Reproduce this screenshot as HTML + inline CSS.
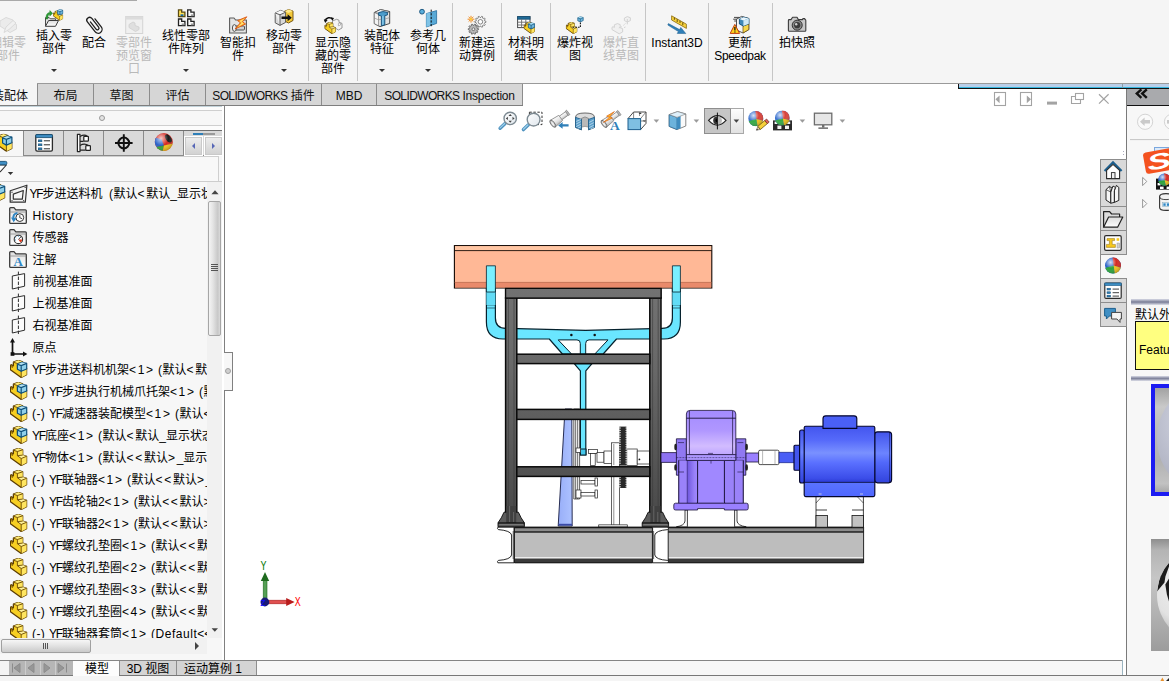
<!DOCTYPE html>
<html><head><meta charset="utf-8"><title>SOLIDWORKS</title>
<style>
html,body{margin:0;padding:0}
body{width:1169px;height:681px;overflow:hidden;position:relative;background:#fff;font-family:"Liberation Sans","Noto Sans CJK SC",sans-serif;font-size:12px;color:#000}
.abs{position:absolute}
svg{position:absolute;overflow:visible}
#tb{position:absolute;left:0;top:0;width:1169px;height:83px;background:#f5f5f5;border-bottom:1px solid #9a9a9a}
#tb .sep{position:absolute;top:3px;width:1px;height:78px;background:#c6c6c6}
.ti{position:absolute;top:0;width:0;height:83px}
.ti .t{position:absolute;left:-45px;width:90px;text-align:center;line-height:13px;font-size:12px;white-space:nowrap}
.ti.dis .t{color:#b9b9b9}
.ti .dd{position:absolute;left:-3px;top:69px;width:0;height:0;border-left:3px solid transparent;border-right:3px solid transparent;border-top:3px solid #333}
.ti svg{left:-10px;width:20px;height:20px}
.ti.lo svg{top:15px}.ti.hi svg{top:8px}
.ti.lo .t{top:37px}.ti.hi .t{top:30px}
#tabs{position:absolute;left:0;top:84px;height:22px;width:523px}
.tab{position:absolute;top:0;height:21px;border:1px solid #8c8c8c;border-top:none;border-bottom:none;background:#d6d6d6;line-height:25px;text-align:center;box-sizing:border-box;white-space:nowrap;color:#111;font-size:12px}
.tab i{font-style:normal}.sw{letter-spacing:-0.62px}.sw2{letter-spacing:-0.25px}
.tab.act{background:#f5f5f5;border:none;height:22px;top:-1px;line-height:27px}
#lp{position:absolute;left:0;top:106px;width:224px;height:554px;background:#f7f7f7;border-right:1px solid #808080}
.row{position:absolute;left:0;height:22px;line-height:22px;white-space:nowrap;font-size:12px}
.row span{position:absolute;top:1px}
.row i{font-style:normal}
.yf{letter-spacing:-1.2px}.lt{letter-spacing:1.7px}.pm{letter-spacing:0.4px}.hs{letter-spacing:0.55px}
</style></head><body>

<!-- TOOLBAR -->
<svg width="0" height="0" style="position:absolute">
<defs>
<linearGradient id="gFold" x1="0" y1="0" x2="0" y2="1"><stop offset="0" stop-color="#dcdcdc"/><stop offset="1" stop-color="#ffffff"/></linearGradient>
<linearGradient id="gTabBtn" x1="0" y1="0" x2="0" y2="1"><stop offset="0" stop-color="#fdfdfd"/><stop offset="1" stop-color="#dcdcdc"/></linearGradient>
<symbol id="pt" viewBox="0 0 18 18">
<path d="M0.4 5.3 L1.4 4.7 L3.4 5.8 L3.4 2.2 L8.3 0.3 L12.7 1.8 L12.7 7.1 L16.6 8.3 L16.6 14.7 L11.2 17.5 L0.4 9.7 Z" fill="#f7cf22" stroke="#5c3d02" stroke-width="1.25" stroke-linejoin="round"/>
<path d="M3.4 2.2 L8.3 0.3 L12.7 1.8 L7.4 3.5 Z" fill="#ffec7a"/>
<path d="M7.4 3.5 L12.7 1.8 L12.7 7.1 L7.4 7.7 Z" fill="#ffe560"/>
<path d="M7.4 7.7 L12.7 7.1 L16.6 8.3 L11.2 10.5 Z" fill="#fff29a"/>
<path d="M11.2 10.5 L16.6 8.3 L16.6 14.7 L11.2 17.5 Z" fill="#ffe560"/>
<path d="M3.4 2.2 L7.4 3.5 L7.4 7.7 L11.2 10.5 L16.6 8.3 M7.4 3.5 L12.7 1.8 M7.4 7.7 L12.7 7.1 M11.2 10.5 L11.2 17.5 M2.2 6.5 L3.4 5.8 M0.4 5.3 L2.2 6.5 L2.2 8" fill="none" stroke="#6b4a05" stroke-width="0.9" stroke-linejoin="round"/>
</symbol>
<symbol id="as" viewBox="0 0 18 18">
<use href="#pt" width="18" height="18"/>
<path d="M7.4 4.2 L11.9 2.3 L16.7 3.4 L16.7 9.0 L11.2 11.3 L7.4 9.2 Z" fill="#8fcfea" stroke="#0d4f7a" stroke-width="1.2" stroke-linejoin="round"/>
<path d="M7.4 4.2 L11.9 2.3 L16.7 3.4 L11.2 5.5 Z" fill="#b5e2f3"/>
<path d="M7.4 4.2 L11.2 5.5 L16.7 3.4 M11.2 5.5 L11.2 11.3" fill="none" stroke="#0d4f7a" stroke-width="1.2"/>
</symbol>
<symbol id="cube" viewBox="0 0 10 10">
<path d="M0.6 2.6 L5 0.6 L9.4 2.2 L9.4 7 L4.6 9.4 L0.6 7.4 Z" fill="#6fb6dc" stroke="#0d4f7a" stroke-width="1" stroke-linejoin="round"/>
<path d="M0.6 2.6 L5 0.6 L9.4 2.2 L4.6 4.2 Z" fill="#a9dcf1"/>
<path d="M0.6 2.6 L4.6 4.2 L9.4 2.2 M4.6 4.2 L4.6 9.4" fill="none" stroke="#0d4f7a" stroke-width="1"/>
</symbol>
<symbol id="fold" viewBox="0 0 18 17">
<path d="M0.7 15.4 L0.7 1.6 Q0.7 0.7 1.6 0.7 L5 0.7 L6.8 2.8 L16.4 2.8 Q17.3 2.8 17.3 3.7 L17.3 15.4 Q17.3 16.3 16.4 16.3 L1.6 16.3 Q0.7 16.3 0.7 15.4 Z" fill="url(#gFold)" stroke="#3a3a3a" stroke-width="1.3" stroke-linejoin="round"/>
<path d="M0.7 5 L17.3 5" stroke="#8a8a8a" stroke-width="0.8"/>
</symbol>
</defs></svg>
<div id="tb">
<div class="abs" style="left:0;top:0;width:137px;height:1px;background:#a9a9a9"></div>
<div class="sep" style="left:308px"></div>
<div class="sep" style="left:357px"></div>
<div class="sep" style="left:452px"></div>
<div class="sep" style="left:501px"></div>
<div class="sep" style="left:550px"></div>
<div class="sep" style="left:645px"></div>
<div class="sep" style="left:708px"></div>
<div class="sep" style="left:772px"></div>
<div class="ti lo dis" style="left:8px"><svg viewBox="0 0 20 20"><g opacity="0.55" fill="#e4e4e4" stroke="#c4c4c4" stroke-width="1" stroke-linejoin="round">
<path d="M2 6 L8 2.5 L15 5 L15 8 L18.5 9.5 L18.5 14 L12 17.5 L2 11 Z"/>
<path d="M6 17.5 L8 12 L15 5.5 L18 8 L11 14.5 Z" fill="#ededed"/></g></svg><div class="t">编辑零<br>部件</div></div>
<div class="ti hi" style="left:54px"><svg viewBox="0 0 20 20"><path d="M1.5 18.3 L1.5 9.6 L5.2 9.6 L6.2 10.8 L11.6 10.8 L11.6 12.6" fill="#e2e2e2" stroke="#4a4a4a" stroke-width="1"/>
<path d="M1.5 18.3 L4.6 12.5 L14.5 12.5 L11.5 18.3 Z" fill="url(#gFold)" stroke="#3c3c3c" stroke-width="1" stroke-linejoin="round"/>
<path d="M2 11 C1.8 6.5 3.5 4.6 5.8 4.4 L5.8 2.6 L8.6 5.3 L5.8 8 L5.8 6.3 C4.3 6.6 3.7 8 3.8 11 Z" fill="#2c9c35" stroke="#1d7a26" stroke-width="0.5"/>
<use href="#pt" x="9" y="2.2" width="10.5" height="10.5"/>
<use href="#cube" x="13" y="1" width="6.4" height="6.4"/></svg><div class="t">插入零<br>部件</div><div class="dd"></div></div>
<div class="ti lo" style="left:94px"><svg viewBox="0 0 20 20"><g transform="translate(10 9) rotate(52) scale(0.86)" fill="none" stroke="#1e1e1e" stroke-width="1.5" stroke-linecap="round">
<path d="M-5.5 1 L5.2 1 A1.9 1.9 0 0 0 5.2 -2.8 L-7.6 -2.8 A3.3 3.3 0 0 0 -7.6 3.8 L6.8 3.8 A4.6 4.6 0 0 0 6.8 -5.4 L-5 -5.4" transform="translate(1 0.8)"/></g></svg><div class="t">配合</div></div>
<div class="ti lo dis" style="left:134px"><svg viewBox="0 0 20 20"><g opacity="0.8"><rect x="1.7" y="1.5" width="17" height="17" fill="#efefef" stroke="#cdcdcd" stroke-width="1"/>
<rect x="1.7" y="1.5" width="17" height="3" fill="#d6d6d6"/>
<path d="M5 9.5 L9 7 L11 8 L11 10.5 L15 12 L15 14.5 L11.5 16.5 L5 12.5 Z" fill="#dadada" stroke="#c6c6c6" stroke-width="0.8"/></g></svg><div class="t">零部件<br>预览窗<br>口</div></div>
<div class="ti hi" style="left:186px"><svg viewBox="0 0 20 20"><path d="M2.5 1.9 h3.2 v2.3 h3.2 v4.4 h-6.4 Z" fill="#ffe25a" stroke="#5a4a10" stroke-width="1.3" stroke-linejoin="miter"/><rect x="4.5" y="6.3" width="3" height="1.8" fill="#1c6aa8"/><path d="M11.7 1.9 h3.2 v2.3 h3.2 v4.4 h-6.4 Z" fill="#fafafa" stroke="#222" stroke-width="1.3" stroke-linejoin="miter"/><rect x="14.9" y="6.4" width="2.8" height="1.8" fill="#9a9a9a"/><path d="M2.5 11.0 h3.2 v2.3 h3.2 v4.4 h-6.4 Z" fill="#fafafa" stroke="#222" stroke-width="1.3" stroke-linejoin="miter"/><rect x="5.7" y="15.5" width="2.8" height="1.8" fill="#9a9a9a"/><path d="M11.7 11.0 h3.2 v2.3 h3.2 v4.4 h-6.4 Z" fill="#fafafa" stroke="#222" stroke-width="1.3" stroke-linejoin="miter"/><rect x="14.9" y="15.5" width="2.8" height="1.8" fill="#9a9a9a"/></svg><div class="t">线性零部<br>件阵列</div><div class="dd"></div></div>
<div class="ti lo" style="left:238px"><svg viewBox="0 0 20 20"><path d="M1.6 18 L1.6 3 L6 3 L7.6 5 L18.4 5 L18.4 18 Z" fill="#e4e4e4" stroke="#5a5a5a" stroke-width="1.1" stroke-linejoin="round"/>
<rect x="5.5" y="11" width="11" height="4" rx="1" fill="#d0d0d0" stroke="#444" stroke-width="0.9"/>
<ellipse cx="6.4" cy="13" rx="2" ry="3.4" fill="#efefef" stroke="#444" stroke-width="0.9"/>
<path d="M18.8 1.8 L9.6 5.6 L12.4 7.8 L7 14 L17.6 9 L14.6 6.8 Z" fill="#ffb428" stroke="#d8541a" stroke-width="0.9" stroke-linejoin="round"/><path d="M17 3.4 L11.6 6 L13.8 7.8 L10 12 L15.6 8.6 L13.4 6.6 Z" fill="#ffe27a"/></svg><div class="t">智能扣<br>件</div></div>
<div class="ti hi" style="left:284px"><svg viewBox="0 0 20 20"><path d="M10.5 3.2 L14.6 1.6 L19 3 L19 12.5 L14.5 15 L10.5 13 Z" fill="#f2c83a" stroke="#6b4a05" stroke-width="0.9" stroke-linejoin="round"/>
<path d="M10.5 3.2 L14.6 1.6 L19 3 L14.5 5 Z" fill="#ffe98a"/>
<path d="M1.2 5 L6.5 2.4 L11.6 4.2 L11.6 14.4 L6 17.4 L1.2 14.8 Z" fill="#d9d9d9" stroke="#4e4e4e" stroke-width="0.9" stroke-linejoin="round"/>
<path d="M1.2 5 L6.5 2.4 L11.6 4.2 L6 6.8 Z" fill="#f7f7f7"/>
<path d="M1.2 5 L6 6.8 L6 17.4 Z" fill="#efefef"/>
<path d="M1.2 5 L6 6.8 L11.6 4.2 M6 6.8 L6 17.4" fill="none" stroke="#4e4e4e" stroke-width="0.9"/>
<path d="M7.5 8.6 L13.6 8.6 L13.6 6.2 L17.8 9.7 L13.6 13.2 L13.6 10.9 L7.5 10.9 Z" fill="#111"/></svg><div class="t">移动零<br>部件</div><div class="dd"></div></div>
<div class="ti lo" style="left:333px"><svg viewBox="0 0 20 20"><path d="M9.5 6 L13.5 4.3 L16 5.2 L16 7.4 L19 8.4 L19 13 L15.5 15 L9.5 11.5 Z" fill="#f4f4f4" stroke="#8d8d8d" stroke-width="0.9" stroke-linejoin="round"/>
<path d="M15.4 8.4 L17.6 7.8 L17.6 10 L15.4 10.8 Z" fill="#fff" stroke="#9a9a9a" stroke-width="0.7"/>
<use href="#pt" x="1.4" y="7" width="12" height="12"/>
<path d="M2 6.2 C3 2.4 7.6 1.6 9.6 4.4" fill="none" stroke="#111" stroke-width="1.5"/>
<path d="M0.8 4.2 L4.6 5 L2.2 8 Z" fill="#111"/><path d="M8 2.2 L11 3 L9.4 6 Z" fill="#111"/></svg><div class="t">显示隐<br>藏的零<br>部件</div></div>
<div class="ti hi" style="left:382px"><svg viewBox="0 0 20 20"><path d="M2.3 4.5 L8.5 1.6 L17.7 3.6 L17.7 15.5 L8 18.6 L2.3 15.6 Z" fill="#e2e2e2" stroke="#4b4b4b" stroke-width="1" stroke-linejoin="round"/>
<path d="M2.3 4.5 L8.5 1.6 L17.7 3.6 L11 6 Z" fill="#fafafa" stroke="#4b4b4b" stroke-width="0.7"/>
<path d="M2.3 4.5 L6.5 6.4 L6.5 17.8 L2.3 15.6 Z" fill="#f3f3f3" stroke="#6b6b6b" stroke-width="0.6"/>
<path d="M6.6 4.6 Q11 2.6 15.4 4.4 L15.4 7 L12.8 7.6 L12.8 16.8 L9.4 17.8 L9.4 8 L6.6 7.2 Z" fill="#4c9ccb" stroke="#134e78" stroke-width="0.9" stroke-linejoin="round"/>
<path d="M10.2 8 L11.6 7.8 L11.6 16.6 L10.2 17 Z" fill="#8ccbea"/>
<path d="M2.3 10 L6.5 11.8 M6.5 11.8 L9.4 11.2 M12.8 11 L17.7 9.6" stroke="#8a8a8a" stroke-width="0.6" fill="none"/></svg><div class="t">装配体<br>特征</div><div class="dd"></div></div>
<div class="ti hi" style="left:428px"><svg viewBox="0 0 20 20"><circle cx="4" cy="3.7" r="2.4" fill="#5aaedb" stroke="#134e78" stroke-width="0.9"/>
<path d="M8.4 5.6 L18.6 2.6 L18.6 15.4 L8.4 19 Z" fill="#58a9d6" stroke="#2a6f9e" stroke-width="0.8" stroke-linejoin="round"/>
<path d="M8.4 5.6 L12 4.6 L12 17.6 L8.4 19 Z" fill="#7fc3e6"/>
<path d="M13.2 1.6 L13.2 19.4" stroke="#111" stroke-width="1" stroke-dasharray="2.2 1.4"/></svg><div class="t">参考几<br>何体</div><div class="dd"></div></div>
<div class="ti lo" style="left:477px"><svg viewBox="0 0 20 20"><path d="M18.98 6.30 L18.98 7.30 L17.59 7.76 L17.35 8.49 L18.21 9.67 L17.62 10.49 L16.23 10.04 L15.60 10.49 L15.60 11.95 L14.64 12.26 L13.79 11.08 L13.01 11.08 L12.16 12.26 L11.20 11.95 L11.20 10.49 L10.57 10.04 L9.18 10.49 L8.59 9.67 L9.45 8.49 L9.21 7.76 L7.82 7.30 L7.82 6.30 L9.21 5.84 L9.45 5.11 L8.59 3.93 L9.18 3.11 L10.57 3.56 L11.20 3.11 L11.20 1.65 L12.16 1.34 L13.01 2.52 L13.79 2.52 L14.64 1.34 L15.60 1.65 L15.60 3.11 L16.23 3.56 L17.62 3.11 L18.21 3.93 L17.35 5.11 L17.59 5.84Z" fill="#f6f6f6" stroke="#6a6a6a" stroke-width="0.8" stroke-linejoin="round"/><circle cx="13.4" cy="6.8" r="2.3" fill="#fdfdfd" stroke="#6a6a6a" stroke-width="0.8"/><path d="M11.58 13.73 L11.58 14.67 L10.20 15.07 L9.99 15.73 L10.86 16.87 L10.32 17.62 L8.97 17.14 L8.40 17.55 L8.44 18.98 L7.56 19.27 L6.75 18.08 L6.05 18.08 L5.24 19.27 L4.36 18.98 L4.40 17.55 L3.83 17.14 L2.48 17.62 L1.94 16.87 L2.81 15.73 L2.60 15.07 L1.22 14.67 L1.22 13.73 L2.60 13.33 L2.81 12.67 L1.94 11.53 L2.48 10.78 L3.83 11.26 L4.40 10.85 L4.36 9.42 L5.24 9.13 L6.05 10.32 L6.75 10.32 L7.56 9.13 L8.44 9.42 L8.40 10.85 L8.97 11.26 L10.32 10.78 L10.86 11.53 L9.99 12.67 L10.20 13.33Z" fill="#b9b9b9" stroke="#5a5a5a" stroke-width="0.8" stroke-linejoin="round"/><circle cx="6.4" cy="14.2" r="1.4" fill="#f0f0f0" stroke="#5a5a5a" stroke-width="0.8"/><g stroke="#f08a1c" stroke-width="1" stroke-linecap="round"><path d="M4 1.2 L4 7.2 M1 4.2 L7 4.2 M1.9 2.1 L6.1 6.3 M6.1 2.1 L1.9 6.3"/></g><circle cx="4" cy="4.2" r="1.1" fill="#ffd23a"/></svg><div class="t">新建运<br>动算例</div></div>
<div class="ti lo" style="left:526px"><svg viewBox="0 0 20 20"><rect x="1.6" y="1.6" width="12.4" height="11" fill="#fff" stroke="#4a4a4a" stroke-width="1"/>
<rect x="1.6" y="1.6" width="12.4" height="2.6" fill="#1f6a96" stroke="#174f74" stroke-width="0.8"/>
<path d="M1.6 7.2 H14 M1.6 10 H14 M5.6 4.2 V12.6 M9.8 4.2 V12.6" stroke="#6a6a6a" stroke-width="0.9"/>
<use href="#pt" x="7.6" y="7" width="11.8" height="11.8"/>
<use href="#cube" x="11.6" y="7.2" width="7.6" height="7.2"/></svg><div class="t">材料明<br>细表</div></div>
<div class="ti lo" style="left:575px"><svg viewBox="0 0 20 20"><use href="#pt" x="0.8" y="7" width="12" height="12"/>
<path d="M7.6 12.2 H15.4 V6.5" fill="none" stroke="#111" stroke-width="1.1" stroke-dasharray="1.6 1.1"/>
<use href="#cube" x="11.8" y="1.2" width="7.4" height="6.2"/></svg><div class="t">爆炸视<br>图</div></div>
<div class="ti lo dis" style="left:621px"><svg viewBox="0 0 20 20"><g opacity="0.9" fill="#f0f0f0" stroke="#cccccc" stroke-width="0.9" stroke-linejoin="round">
<path d="M1 12.3 L2 11.7 L3.4 12.4 L3.4 9.8 L6.4 8.6 L9.2 9.6 L9.2 12.8 L11.6 13.6 L11.6 17 L8.2 18.8 L1 14.6 Z"/>
<path d="M7.8 13 L11 11.6 M12.4 10.4 L14.8 8.2 M13 12.6 L15 11.8" fill="none" stroke-dasharray="1.6 1"/>
<path d="M13.4 3 L16.4 1.6 L19.4 2.8 L19.4 5.6 L16.2 7 L13.4 5.6 Z"/><path d="M16.3 4 L16.3 9.4" fill="none"/></g></svg><div class="t">爆炸直<br>线草图</div></div>
<div class="ti lo" style="left:677px"><svg viewBox="0 0 20 20"><path d="M4.6 0.8 L19.4 9.2 L19.4 13.4 L4.6 5 Z" fill="#f6d13a" stroke="#8a6a10" stroke-width="0.8" stroke-linejoin="round"/>
<path d="M7.4 2.6 v2.2 M10.2 4.2 v2.8 M13 5.8 v2.2 M15.8 7.4 v2.8" stroke="#5a4508" stroke-width="0.9"/>
<path d="M1.4 8.6 L12.6 14.6 L13.8 12.4 L18.8 18.6 L10.2 18.4 L11.4 16.6 L0.8 10 Z" fill="#2f7fb8" stroke="#1c5d8d" stroke-width="0.5" stroke-linejoin="round"/></svg><div class="t">Instant3D</div></div>
<div class="ti lo" style="left:740px"><svg viewBox="0 0 20 20"><path d="M4 2.4 H9.6 M3.2 4.2 H8 M4.2 6 H7" stroke="#333" stroke-width="0.9"/>
<path d="M6.5 4.2 L11.6 1.4 L18.8 3.4 L18.8 14.6 L13 18 L6.5 15 Z" fill="#f6f6f6" stroke="#3f3f3f" stroke-width="0.9" stroke-linejoin="round"/>
<path d="M13 11 L18.8 8.8 L18.8 14.6 L13 18 Z" fill="#f6d64a" stroke="#6b4a05" stroke-width="0.7"/>
<path d="M9.4 4 L13.6 2.2 L18.8 3.6 L18.8 8.8 L13.4 11 L9.4 9 Z" fill="#3f88b6" stroke="#0d4f7a" stroke-width="0.9" stroke-linejoin="round"/>
<path d="M9.4 4 L13.6 2.2 L18.8 3.6 L13.4 5.6 Z" fill="#eaf6fc"/>
<path d="M13.4 5.6 L18.8 3.6 L18.8 8.8 L13.4 11 Z" fill="#cfe9f6"/>
<path d="M4.8 9.4 L9.6 18.4 L0.2 18.4 Z" fill="#ffd21e" stroke="#c03a10" stroke-width="1" stroke-linejoin="round"/>
<path d="M4.9 12 V15.4 M4.9 16.4 V17.4" stroke="#111" stroke-width="1.3"/></svg><div class="t">更新<br><span style="letter-spacing:-0.3px">Speedpak</span></div></div>
<div class="ti lo" style="left:797px"><svg viewBox="0 0 20 20"><path d="M1.4 15.4 V5.4 Q1.4 4.6 2.2 4.6 H4 L5.6 2.2 H10 L11.4 4.6 H15.4 L16 3.6 H17.6 L18.2 4.6 Q18.8 4.8 18.8 5.6 V15.4 Q18.8 16.2 18 16.2 H2.2 Q1.4 16.2 1.4 15.4 Z" fill="#c8c8c8" stroke="#3c3c3c" stroke-width="1.1" stroke-linejoin="round"/>
<circle cx="10.2" cy="10.2" r="5" fill="#8a8a8a" stroke="#333" stroke-width="1"/>
<circle cx="10.2" cy="10.2" r="3.1" fill="#3a3a3a"/><circle cx="9.2" cy="9.2" r="1.2" fill="#cfcfcf"/></svg><div class="t">拍快照</div></div>
</div>

<!-- TABS -->
<div id="tabs">
<div class="tab act" style="left:-21px;width:58px;text-align:right;padding-right:9px">装配体</div>
<div class="tab" style="left:37px;width:57px">布局</div>
<div class="tab" style="left:93px;width:57px">草图</div>
<div class="tab" style="left:149px;width:57px">评估</div>
<div class="tab" style="left:205px;width:117px"><i class="sw">SOLIDWORKS</i> 插件</div>
<div class="tab" style="left:321px;width:56px">MBD</div>
<div class="tab" style="left:376px;width:147px"><i class="sw">SOLIDWORKS</i><i class="sw2"> Inspection</i></div>
<div class="abs" style="left:0;top:21px;width:523px;height:1px;background:#7e7e7e"></div>
</div>

<!-- LEFT -->
<div id="lp">
<div class="abs" style="left:0;top:0;width:222px;height:1px;background:#c3d3da"></div>
<div class="abs" style="left:0;top:1px;width:222px;height:3px;background:#fcfcfc"></div>
<div class="abs" style="left:0;top:4px;width:222px;height:1px;background:#cfcfcf"></div>
<div class="abs" style="left:0;top:19px;width:222px;height:1px;background:#cfcfcf"></div>
<div class="abs" style="left:0;top:20px;width:222px;height:4px;background:#fcfcfc"></div>
<div class="abs" style="left:98.5px;top:9px;width:6px;height:6px;border:1px solid #9a9a9a;border-radius:50%;background:#e4e4e4;box-sizing:border-box"></div>
<div class="abs" style="left:0;top:24px;width:222px;height:26px;background:#d9d9d9;border-top:1px solid #707070;border-bottom:1px solid #8a8a8a;box-sizing:border-box"></div>
<div class="abs" style="left:0;top:25px;width:23px;height:25px;background:#f7f7f7"></div>
<div class="abs" style="left:23px;top:25px;width:1px;height:24px;background:#8a8a8a"></div>
<div class="abs" style="left:63px;top:25px;width:1px;height:24px;background:#8a8a8a"></div>
<div class="abs" style="left:103px;top:25px;width:1px;height:24px;background:#8a8a8a"></div>
<div class="abs" style="left:143px;top:25px;width:1px;height:24px;background:#8a8a8a"></div>
<div class="abs" style="left:183px;top:25px;width:1px;height:24px;background:#8a8a8a"></div>
<div class="abs" style="left:193px;top:27px;width:20px;height:2px;background:#2f7fb8"></div><div class="abs" style="left:203px;top:27px;width:12px;height:2px;background:#9a9a9a"></div>
<div class="abs" style="left:184px;top:30px;width:19px;height:20px;background:#fff"></div>
<div class="abs" style="left:185px;top:31px;width:17px;height:18px;background:linear-gradient(#ececec,#d2d2d2);border:1px solid #c9c9c9;box-sizing:border-box"></div>
<div class="abs" style="left:192px;top:37px;width:0;height:0;border-top:3px solid transparent;border-bottom:3px solid transparent;border-right:3.5px solid #5767b6"></div>
<div class="abs" style="left:204px;top:30px;width:18px;height:20px;background:#fff"></div>
<div class="abs" style="left:205px;top:31px;width:17px;height:18px;background:linear-gradient(#ececec,#d2d2d2);border:1px solid #c9c9c9;box-sizing:border-box"></div>
<div class="abs" style="left:212px;top:37px;width:0;height:0;border-top:3px solid transparent;border-bottom:3px solid transparent;border-left:3.5px solid #5767b6"></div>
<svg style="left:0;top:24px" width="184" height="26" viewBox="0 130 184 26">
<use href="#as" x="-4.8" y="133.8" width="18" height="18"/>
<rect x="35.8" y="134.6" width="16.6" height="16.6" rx="1.4" fill="#fff" stroke="#2b2b2b" stroke-width="1.3"/><rect x="35.8" y="134.6" width="16.6" height="3" rx="1" fill="#3f8fc4" stroke="#174f74" stroke-width="0.9"/>
<rect x="38.3" y="139.9" width="3.6" height="1.8" fill="#2f7fb8" stroke="#174f74" stroke-width="0.6"/><path d="M43.8 140.8 H50" stroke="#2b2b2b" stroke-width="1"/>
<rect x="38.3" y="143.9" width="3.6" height="1.8" fill="#2f7fb8" stroke="#174f74" stroke-width="0.6"/><path d="M43.8 144.8 H50" stroke="#2b2b2b" stroke-width="1"/>
<rect x="38.3" y="147.9" width="3.6" height="1.8" fill="#2f7fb8" stroke="#174f74" stroke-width="0.6"/><path d="M43.8 148.8 H50" stroke="#2b2b2b" stroke-width="1"/>
<g fill="#fff" stroke="#222" stroke-width="1.2" stroke-linejoin="round"><rect x="77.4" y="134.4" width="2.6" height="17.2"/><path d="M80 136.4 Q84.6 133.8 87.4 136.4 M80 141.4 H83.6 M80 145.4 Q84.6 142.8 88.6 145.6 M80 150.2 H85.6" fill="none"/><rect x="83.8" y="136.4" width="4.6" height="4.8" rx="0.6"/><rect x="85.8" y="145.6" width="4.6" height="4.8" rx="0.6"/></g>
<circle cx="123.8" cy="143" r="5.4" fill="none" stroke="#111" stroke-width="2"/><path d="M123.8 134.2 V151.8 M115 143 H132.6" stroke="#111" stroke-width="1.9"/>
<defs><clipPath id="cb"><circle cx="163.8" cy="142" r="9"/></clipPath><radialGradient id="gball" cx="0.35" cy="0.3" r="0.8"><stop offset="0" stop-color="#fff" stop-opacity="0.75"/><stop offset="0.5" stop-color="#fff" stop-opacity="0"/><stop offset="1" stop-color="#000" stop-opacity="0.35"/></radialGradient></defs>
<g clip-path="url(#cb)"><rect x="154" y="132" width="20" height="22" fill="#d42a22"/><path d="M154 137 L161.6 139.4 L164 145.6 L154 147.4 Z" fill="#2b62c8"/><path d="M154 147.4 L164 145.6 L162 154 H154 Z" fill="#2aa33a"/><path d="M164 145.6 L174 143.4 V154 H162 Z" fill="#f0c21a"/><ellipse cx="168.4" cy="138.4" rx="2.6" ry="4.6" transform="rotate(-35 168.4 138.4)" fill="#1a1a1a"/><circle cx="163.8" cy="142" r="9" fill="url(#gball)"/></g>
</svg>
<div class="abs" style="left:-1px;top:50px;width:220px;height:26px;border:1px solid #cfcfcf;background:#f8f8f8;box-sizing:border-box"></div>
<svg style="left:0;top:54px" width="16" height="20" viewBox="0 160 16 20"><path d="M-6 165 H6.4 L0.4 171.6 H-6 Z" fill="#fff" stroke="#333" stroke-width="1.1" stroke-linejoin="round"/><rect x="-6" y="161.4" width="12.8" height="3.4" rx="1.2" fill="#3f8fc4" stroke="#174f74" stroke-width="0.9"/><path d="M7.8 171.9 h5.4 l-2.7 3 Z" fill="#333"/></svg>
<div class="abs" style="left:0;top:75px;width:222px;height:1px;background:#cdcdcd"></div>
<div id="tree" class="abs" style="left:0;top:76px;width:207px;height:456px;overflow:hidden;background:#f7f7f7">
<div class="row" style="top:0px"><svg style="left:-12px;top:1px" width="18" height="18"><use href="#as" width="18" height="18"/></svg><svg style="left:9px;top:2px" width="20" height="20" viewBox="9 184 20 20"><path d="M10.2 190.8 L26.9 185.2 L25.3 202.2 L10.2 202.2 Z" fill="#f4f4f4" stroke="#333" stroke-width="1.2" stroke-linejoin="round"/><path d="M13.3 194.1 L23.3 190.5 L22.3 199.1 L13.3 199.1 Z" fill="#f7f7f7" stroke="#333" stroke-width="1.2" stroke-linejoin="round"/><g fill="#444"><circle cx="12" cy="192.2" r="0.7"/><circle cx="25.2" cy="187.4" r="0.7"/><circle cx="12" cy="200.6" r="0.7"/><circle cx="23.6" cy="200.6" r="0.7"/></g></svg><span style="left:29.5px"><i class="yf">YF</i>步进送料机&nbsp; <i class="pm">(</i>默认<i class="lt">&lt;</i>默认_显示状态</span></div>
<div class="row" style="top:22px"><svg style="left:9px;top:3px" width="18" height="17"><use href="#fold" width="18" height="17"/><circle cx="10.8" cy="10.6" r="3.9" fill="#fff" stroke="#333" stroke-width="1"/><path d="M10.8 8.2 V10.8 L13 11.6" fill="none" stroke="#333" stroke-width="0.9"/><path d="M8.4 6 Q3.4 7 4.6 12" fill="none" stroke="#2f86c4" stroke-width="2"/><path d="M2 10.6 L7.6 11.2 L4.6 15.2 Z" fill="#2f86c4"/></svg><span style="left:32.5px"><i class="hs">History</i></span></div>
<div class="row" style="top:44px"><svg style="left:9px;top:3px" width="18" height="17"><use href="#fold" width="18" height="17"/><circle cx="9.4" cy="10.4" r="4.2" fill="#fff" stroke="#333" stroke-width="1.1"/><path d="M9.4 10.4 L12 7.8" stroke="#333" stroke-width="1"/><path d="M9.4 10.4 L13.2 10.4 A3.8 3.8 0 0 1 11.4 13.6 Z" fill="#e03a1e"/><path d="M6.4 8.2 l0.8 0.6 M6 11 h1 M9.4 6.8 v1" stroke="#2f86c4" stroke-width="0.9"/></svg><span style="left:32.5px">传感器</span></div>
<div class="row" style="top:66px"><svg style="left:9px;top:3px" width="18" height="17"><use href="#fold" width="18" height="17"/><text x="9.2" y="14.8" text-anchor="middle" font-family="Liberation Serif,serif" font-weight="bold" font-size="13" fill="#2f86c4">A</text></svg><span style="left:32.5px">注解</span></div>
<div class="row" style="top:88px"><svg style="left:11px;top:1px" width="16" height="20" viewBox="11 0 16 20"><path d="M12.3 5 L24.6 2.6 L24.6 15.2 L12.3 18 Z" fill="#fbfbfb" stroke="#2e2e2e" stroke-width="1" stroke-linejoin="round"/><path d="M18.4 0.6 V19.6" stroke="#2e2e2e" stroke-width="1" stroke-dasharray="3.4 1.6"/></svg><span style="left:32.5px">前视基准面</span></div>
<div class="row" style="top:110px"><svg style="left:11px;top:1px" width="16" height="20" viewBox="11 0 16 20"><path d="M12.3 5 L24.6 2.6 L24.6 15.2 L12.3 18 Z" fill="#fbfbfb" stroke="#2e2e2e" stroke-width="1" stroke-linejoin="round"/><path d="M18.4 0.6 V19.6" stroke="#2e2e2e" stroke-width="1" stroke-dasharray="3.4 1.6"/></svg><span style="left:32.5px">上视基准面</span></div>
<div class="row" style="top:132px"><svg style="left:11px;top:1px" width="16" height="20" viewBox="11 0 16 20"><path d="M12.3 5 L24.6 2.6 L24.6 15.2 L12.3 18 Z" fill="#fbfbfb" stroke="#2e2e2e" stroke-width="1" stroke-linejoin="round"/><path d="M18.4 0.6 V19.6" stroke="#2e2e2e" stroke-width="1" stroke-dasharray="3.4 1.6"/></svg><span style="left:32.5px">右视基准面</span></div>
<div class="row" style="top:154px"><svg style="left:9px;top:1px" width="20" height="20" viewBox="9 0 20 20"><path d="M12.5 4 V17 H24" fill="none" stroke="#111" stroke-width="1.7"/><path d="M12.5 1 L15 5.4 H10 Z M27.4 17 L23 14.4 V19.6 Z" fill="#111"/><rect x="10.6" y="15.2" width="3.8" height="3.6" fill="#111"/></svg><span style="left:32.5px">原点</span></div>
<div class="row" style="top:176px"><svg style="left:10px;top:2px" width="18" height="18"><use href="#as" width="18" height="18"/></svg><span style="left:32.0px"><i class="yf">YF</i>步进送料机机架<i class="lt">&lt;1&gt;</i> <i class="pm">(</i>默认<i class="lt">&lt;</i>默认_显示状态-1&gt;)</span></div>
<div class="row" style="top:198px"><svg style="left:10px;top:2px" width="18" height="18"><use href="#as" width="18" height="18"/></svg><span style="left:32.0px"><i class="pm">(-) </i><i class="yf">YF</i>步进执行机械爪托架<i class="lt">&lt;1&gt;</i> <i class="pm">(</i>默认<i class="lt">&lt;</i>默认_显示状态-1&gt;)</span></div>
<div class="row" style="top:220px"><svg style="left:10px;top:2px" width="18" height="18"><use href="#as" width="18" height="18"/></svg><span style="left:32.0px"><i class="pm">(-) </i><i class="yf">YF</i>减速器装配模型<i class="lt">&lt;1&gt;</i> <i class="pm">(</i>默认<i class="lt">&lt;</i>默认_显示状态-1&gt;)</span></div>
<div class="row" style="top:242px"><svg style="left:10px;top:2px" width="18" height="18"><use href="#as" width="18" height="18"/></svg><span style="left:32.0px"><i class="yf">YF</i>底座<i class="lt">&lt;1&gt;</i> <i class="pm">(</i>默认<i class="lt">&lt;</i>默认_显示状态-1&gt;)</span></div>
<div class="row" style="top:264px"><svg style="left:10px;top:2px" width="18" height="18"><use href="#pt" width="18" height="18"/></svg><span style="left:32.0px"><i class="yf">YF</i>物体<i class="lt">&lt;1&gt;</i> <i class="pm">(</i>默认<i class="lt">&lt;&lt;</i>默认<i class="lt">&gt;</i>_显示状态 1&gt;)</span></div>
<div class="row" style="top:286px"><svg style="left:10px;top:2px" width="18" height="18"><use href="#pt" width="18" height="18"/></svg><span style="left:32.0px"><i class="pm">(-) </i><i class="yf">YF</i>联轴器<i class="lt">&lt;1&gt;</i> <i class="pm">(</i>默认<i class="lt">&lt;&lt;</i>默认<i class="lt">&gt;</i>_显示状态 1&gt;)</span></div>
<div class="row" style="top:308px"><svg style="left:10px;top:2px" width="18" height="18"><use href="#pt" width="18" height="18"/></svg><span style="left:32.0px"><i class="pm">(-) </i><i class="yf">YF</i>齿轮轴2<i class="lt">&lt;1&gt;</i> <i class="pm">(</i>默认<i class="lt">&lt;&lt;</i>默认<i class="lt">&gt;</i>_显示状态 1&gt;)</span></div>
<div class="row" style="top:330px"><svg style="left:10px;top:2px" width="18" height="18"><use href="#pt" width="18" height="18"/></svg><span style="left:32.0px"><i class="pm">(-) </i><i class="yf">YF</i>联轴器2<i class="lt">&lt;1&gt;</i> <i class="pm">(</i>默认<i class="lt">&lt;&lt;</i>默认<i class="lt">&gt;</i>_显示状态 1&gt;)</span></div>
<div class="row" style="top:352px"><svg style="left:10px;top:2px" width="18" height="18"><use href="#pt" width="18" height="18"/></svg><span style="left:32.0px"><i class="pm">(-) </i><i class="yf">YF</i>螺纹孔垫圈<i class="lt">&lt;1&gt;</i> <i class="pm">(</i>默认<i class="lt">&lt;&lt;</i>默认<i class="lt">&gt;</i>_显示状态 1&gt;)</span></div>
<div class="row" style="top:374px"><svg style="left:10px;top:2px" width="18" height="18"><use href="#pt" width="18" height="18"/></svg><span style="left:32.0px"><i class="pm">(-) </i><i class="yf">YF</i>螺纹孔垫圈<i class="lt">&lt;2&gt;</i> <i class="pm">(</i>默认<i class="lt">&lt;&lt;</i>默认<i class="lt">&gt;</i>_显示状态 1&gt;)</span></div>
<div class="row" style="top:396px"><svg style="left:10px;top:2px" width="18" height="18"><use href="#pt" width="18" height="18"/></svg><span style="left:32.0px"><i class="pm">(-) </i><i class="yf">YF</i>螺纹孔垫圈<i class="lt">&lt;3&gt;</i> <i class="pm">(</i>默认<i class="lt">&lt;&lt;</i>默认<i class="lt">&gt;</i>_显示状态 1&gt;)</span></div>
<div class="row" style="top:418px"><svg style="left:10px;top:2px" width="18" height="18"><use href="#pt" width="18" height="18"/></svg><span style="left:32.0px"><i class="pm">(-) </i><i class="yf">YF</i>螺纹孔垫圈<i class="lt">&lt;4&gt;</i> <i class="pm">(</i>默认<i class="lt">&lt;&lt;</i>默认<i class="lt">&gt;</i>_显示状态 1&gt;)</span></div>
<div class="row" style="top:440px"><svg style="left:10px;top:2px" width="18" height="18"><use href="#pt" width="18" height="18"/></svg><span style="left:32.0px"><i class="pm">(-) </i><i class="yf">YF</i>联轴器套筒<i class="lt">&lt;1&gt;</i> <i class="pm">(</i><i class="hs">Default</i>&lt;&lt;Default&gt;_Display State 1&gt;)</span></div>
</div>
<div class="abs" style="left:207px;top:76px;width:15px;height:456px;background:#f1f1f1"></div>
<div class="abs" style="left:208px;top:95px;width:13px;height:135px;background:linear-gradient(90deg,#f4f4f4,#e4e4e4 35%,#c8c8c8 80%,#dadada);border:1px solid #a6a6a6;border-radius:2px;box-sizing:border-box"></div>
<div class="abs" style="left:211px;top:158px;width:7px;height:1px;background:#555;box-shadow:0 2px 0 #555,0 4px 0 #555,0 6px 0 #555"></div>
<svg style="left:207px;top:76px" width="15" height="456" viewBox="0 0 15 456"><path d="M4.4 12.2 L8 8.2 L11.6 12.2 Z" fill="#454545"/><path d="M4.6 446.2 h6.4 l-3.2 3.6 Z" fill="#444"/></svg>
<div class="abs" style="left:0;top:532px;width:207px;height:16px;background:#f1f1f1"></div>
<div class="abs" style="left:1px;top:533px;width:90px;height:14px;background:linear-gradient(#f6f6f6,#e6e6e6 40%,#cacaca);border:1px solid #a0a0a0;border-radius:2px;box-sizing:border-box"></div>
<div class="abs" style="left:43px;top:537px;width:1px;height:6px;background:#555;box-shadow:2px 0 0 #555,4px 0 0 #555"></div>
<div class="abs" style="left:195px;top:536px;width:0;height:0;border-top:4px solid transparent;border-bottom:4px solid transparent;border-left:4px solid #444"></div>
<div class="abs" style="left:222px;top:0;width:2px;height:554px;background:#fff"></div>
</div>

<!-- VIEWPORT -->
<div id="vp">
<div class="abs" style="left:224px;top:352px;width:9px;height:39px;background:#f7f7f7;border:1px solid #808080;border-left:none;box-sizing:border-box"></div>
<div class="abs" style="left:225px;top:368px;width:6px;height:6px;border-radius:50%;background:#cfcfcf;border:1px solid #a0a0a0;box-sizing:border-box"></div>
<svg style="left:0;top:0" width="1169" height="681" viewBox="0 0 1169 681">
<defs>
<linearGradient id="gMotor" x1="0" y1="0" x2="0" y2="1"><stop offset="0" stop-color="#4355ee"/><stop offset="0.2" stop-color="#566afa"/><stop offset="0.38" stop-color="#7a91ff"/><stop offset="0.52" stop-color="#5a70ff"/><stop offset="0.74" stop-color="#3b4de9"/><stop offset="0.79" stop-color="#2e3dd6"/><stop offset="0.8" stop-color="#5a73ff"/><stop offset="1" stop-color="#4f67ff"/></linearGradient>
<linearGradient id="gMotorCap" x1="0" y1="0" x2="0" y2="1"><stop offset="0" stop-color="#4254ec"/><stop offset="0.42" stop-color="#6c84ff"/><stop offset="0.6" stop-color="#5268fa"/><stop offset="1" stop-color="#3243dc"/></linearGradient>
<linearGradient id="gRed" x1="0" y1="0" x2="0" y2="1"><stop offset="0" stop-color="#a38bff"/><stop offset="0.45" stop-color="#b097ff"/><stop offset="0.8" stop-color="#d2bcff"/><stop offset="1" stop-color="#bea6ff"/></linearGradient>
<linearGradient id="gRed2" x1="0" y1="0" x2="1" y2="0"><stop offset="0" stop-color="#6c54dc"/><stop offset="0.7" stop-color="#9880f8"/><stop offset="1" stop-color="#a088ff"/></linearGradient>
<linearGradient id="gLeg" x1="0" y1="0" x2="1" y2="0"><stop offset="0" stop-color="#98aef8"/><stop offset="1" stop-color="#adc2ff"/></linearGradient>
<linearGradient id="gFrame" gradientUnits="userSpaceOnUse" x1="0" y1="288" x2="0" y2="524"><stop offset="0" stop-color="#727272"/><stop offset="0.35" stop-color="#686868"/><stop offset="1" stop-color="#484848"/></linearGradient>
<radialGradient id="gBall" cx="0.35" cy="0.3" r="0.8"><stop offset="0" stop-color="#fff" stop-opacity="0.8"/><stop offset="0.45" stop-color="#fff" stop-opacity="0"/><stop offset="1" stop-color="#000" stop-opacity="0.3"/></radialGradient>
</defs>
<g stroke="#06222e" stroke-width="1.2" stroke-linejoin="round">
<path d="M486.4 265.8 H495.4 V318 Q495.4 328.4 506 328.4 L585.6 330.4 L662 328.4 Q672.4 328.4 672.4 318 V265.8 H680.4 V322 Q680.4 339 664 339 L616.5 339 L603.2 354 H562.4 L549.3 339 L503 339 Q486.4 339 486.4 322 Z" fill="#6ae6ff"/>
<path d="M486.4 291.6 H495.4 M486.4 305 H495.4 M486.4 308 H495.4 M672.4 291.6 H680.4 M672.4 305 H680.4 M672.4 308 H680.4" fill="none" stroke-width="0.6"/>
<path d="M486.4 292 H495.4 V305 H486.4 Z M672.4 292 H680.4 V305 H672.4 Z" fill="#62dcf6" stroke="none"/>
<path d="M558.2 339.9 H577 Q580.3 339.9 580.3 343.4 V354 H571.6 Z M608 339.9 H589 Q585.7 339.9 585.7 343.4 V354 H594.8 Z" fill="#fff" stroke-width="1"/>
<circle cx="571.4" cy="335" r="1.25" fill="#111" stroke="none"/><circle cx="594.7" cy="335" r="1.25" fill="#111" stroke="none"/>
<path d="M574.2 363.6 H592 L585.8 370.8 V455 H580.4 V370.8 Z" fill="#6ae6ff"/>
<path d="M580.4 449 H586 V455 H580.4 Z" fill="#45c7ea"/>
</g>
<path d="M565 409 L571.8 409 L572.2 526 L558.2 526 Z" fill="url(#gLeg)" stroke="#141a40" stroke-width="0.9"/><path d="M558.6 524.6 H572" stroke="#3a4aa8" stroke-width="1.6"/>
<path d="M573.8 409 H579.6 V499 H573.8 Z" fill="#f2f2f2" stroke="#222" stroke-width="0.7"/><path d="M575.6 409 V499 M577.6 419 V499" stroke="#222" stroke-width="0.6"/>
<g fill="#fff" stroke="#222" stroke-width="0.7">
<rect x="576" y="448" width="4.6" height="4.4"/><rect x="576" y="490" width="5" height="8"/>
<rect x="588.6" y="449.6" width="9" height="4"/><rect x="590.6" y="453.6" width="4.6" height="12"/><rect x="597" y="452.6" width="7" height="9.6"/><rect x="604" y="451" width="8.6" height="12.6"/>
<rect x="611.6" y="442.8" width="8" height="82.4"/><path d="M613.8 444 V465 M613.8 477 V525" fill="none" stroke-width="0.5"/>
<rect x="626.8" y="449" width="10.4" height="16.4"/><rect x="637.2" y="451" width="12.4" height="13"/>
<rect x="581" y="480.6" width="14" height="3.4"/><rect x="581" y="492.4" width="14" height="3.6"/><rect x="595" y="478" width="2.6" height="8"/><rect x="595" y="490" width="2.6" height="8"/>
<path d="M598.6 524.8 H627.4 V527 H598.6 Z"/>
</g>
<circle cx="639.4" cy="459.4" r="0.9" fill="#111"/>
<rect x="619.4" y="426.6" width="7" height="39" fill="#2a2a2a"/><rect x="620" y="476.4" width="6.4" height="11.6" fill="#2a2a2a"/>
<path d="M618.8 428.0 H621 M625.4 428.0 H627.4 M618.8 430.4 H621 M625.4 430.4 H627.4 M618.8 432.7 H621 M625.4 432.7 H627.4 M618.8 435.1 H621 M625.4 435.1 H627.4 M618.8 437.4 H621 M625.4 437.4 H627.4 M618.8 439.8 H621 M625.4 439.8 H627.4 M618.8 442.1 H621 M625.4 442.1 H627.4 M618.8 444.4 H621 M625.4 444.4 H627.4 M618.8 446.8 H621 M625.4 446.8 H627.4 M618.8 449.1 H621 M625.4 449.1 H627.4 M618.8 451.5 H621 M625.4 451.5 H627.4 M618.8 453.9 H621 M625.4 453.9 H627.4 M618.8 456.2 H621 M625.4 456.2 H627.4 M618.8 458.6 H621 M625.4 458.6 H627.4 M618.8 460.9 H621 M625.4 460.9 H627.4 M618.8 463.2 H621 M625.4 463.2 H627.4 M618.8 477.4 H621 M625.4 477.4 H627.4 M618.8 479.7 H621 M625.4 479.7 H627.4 M618.8 482.1 H621 M625.4 482.1 H627.4 M618.8 484.4 H621 M625.4 484.4 H627.4 M618.8 486.8 H621 M625.4 486.8 H627.4" stroke="#fff" stroke-width="0.7"/>
<g fill="url(#gFrame)" stroke="#0a0a0a" stroke-width="1.5">
<rect x="505.6" y="288.4" width="155.4" height="9.6"/>
<rect x="505.6" y="298" width="11.2" height="226"/><rect x="649.8" y="298" width="11.2" height="226"/>
<rect x="516.8" y="354.2" width="133" height="9.4"/>
<rect x="516.8" y="409.4" width="133" height="10.0"/>
<rect x="516.8" y="466.8" width="133" height="9.6"/>
</g>
<path d="M508.4 298 V512 M652.6 298 V512 M514 298 V512 M658.2 298 V512" stroke="#3a3a3a" stroke-width="0.6" fill="none"/>
<path d="M504.0 512.2 H518.4 Q520.8 518 524.4 522.8 V526.8 H498.0 V522.8 Q501.6 518 504.0 512.2 Z" fill="#5c5c5c" stroke="#0a0a0a" stroke-width="0.9" stroke-linejoin="round"/>
<rect x="506.2" y="506" width="10" height="17" fill="#404040"/>
<path d="M509.6 506 V522 M513.6 512 V522" stroke="#777" stroke-width="0.7"/>
<path d="M498.0 523 H524.4" stroke="#0a0a0a" stroke-width="1.2"/><path d="M499.2 524.4 H523.2" stroke="#8a8a8a" stroke-width="0.7"/>
<path d="M648.2 512.2 H662.6 Q665.0 518 668.6 522.8 V526.8 H642.2 V522.8 Q645.8 518 648.2 512.2 Z" fill="#5c5c5c" stroke="#0a0a0a" stroke-width="0.9" stroke-linejoin="round"/>
<rect x="650.4" y="506" width="10" height="17" fill="#404040"/>
<path d="M653.8 506 V522 M657.8 512 V522" stroke="#777" stroke-width="0.7"/>
<path d="M642.2 523 H668.6" stroke="#0a0a0a" stroke-width="1.2"/><path d="M643.4 524.4 H667.4" stroke="#8a8a8a" stroke-width="0.7"/>
<rect x="454.4" y="245.6" width="257.4" height="42.4" fill="#ffb896" stroke="#120804" stroke-width="1.1"/>
<rect x="455" y="246.2" width="256.2" height="4.2" fill="#ffc6a4"/><path d="M454.4 250.6 H711.8" stroke="#1a0c06" stroke-width="0.9"/>
<rect x="455" y="282.4" width="256.2" height="5.2" fill="#e98a6b"/><path d="M454.4 282.4 H711.8" stroke="#a85a40" stroke-width="0.6"/>
<path d="M486.4 292 V265.8 H495.4 V292 Z M672.4 292 V265.8 H680.4 V292 Z" fill="#7af0ff" stroke="#06222e" stroke-width="0.8"/>
<rect x="505.6" y="288.4" width="155.4" height="9.6" fill="url(#gFrame)" stroke="#0a0a0a" stroke-width="1.2"/>
<rect x="514.4" y="527" width="138.0" height="36" fill="#bdbdbd"/><rect x="514.4" y="526.6" width="138.0" height="2" fill="#161616"/><rect x="514.4" y="528.6" width="138.0" height="2.6" fill="#8c8c8c"/><rect x="514.4" y="531.2" width="138.0" height="1.5" fill="#1c1c1c"/><rect x="514.4" y="557" width="138.0" height="1.6" fill="#ededed"/><rect x="514.4" y="558.6" width="138.0" height="4.4" fill="#3a3a3a"/><rect x="514.4" y="562.4" width="138.0" height="0.9" fill="#111"/><path d="M514.4 527 V563" stroke="#111" stroke-width="0.9"/>
<rect x="668.2" y="527" width="195.4" height="36" fill="#bdbdbd"/><rect x="668.2" y="526.6" width="195.4" height="2" fill="#161616"/><rect x="668.2" y="528.6" width="195.4" height="2.6" fill="#8c8c8c"/><rect x="668.2" y="531.2" width="195.4" height="1.5" fill="#1c1c1c"/><rect x="668.2" y="557" width="195.4" height="1.6" fill="#ededed"/><rect x="668.2" y="558.6" width="195.4" height="4.4" fill="#3a3a3a"/><rect x="668.2" y="562.4" width="195.4" height="0.9" fill="#111"/><path d="M668.2 527 V563" stroke="#111" stroke-width="0.9"/>
<path d="M863.6 527 V563" stroke="#111" stroke-width="0.9"/><path d="M652.4 527 V563" stroke="#111" stroke-width="0.9"/>
<g fill="#fff" stroke="#111" stroke-width="0.9" stroke-linejoin="round">
<path d="M497.9 527.2 H514 V562.8 H497.9 Q496.8 561.4 498.4 560.4 Q510.6 559.6 511.6 555 V535 Q510.6 530.6 498.4 529.6 Q496.8 528.6 497.9 527.2 Z"/>
<path d="M668 527.2 H652.6 V562.8 H668 Q669 561.4 667.6 560.4 Q655.8 559.6 654.8 555 V535 Q655.8 530.6 667.6 529.6 Q669 528.6 668 527.2 Z"/>
</g>
<path d="M513.2 531 V559 M653.6 531 V559" stroke="#111" stroke-width="0.6"/>
<g fill="#fff" stroke="#111" stroke-width="0.8" stroke-linejoin="round"><path d="M685 510 H687.4 V526.8 H676.4 Q684.6 525.6 685 521 Z"/><path d="M734.6 510 H737 V521 Q737.4 525.6 746.2 526.8 H734.6 Z"/></g>
<g stroke="#1a1238" stroke-width="0.8" stroke-linejoin="round">
<rect x="661" y="452.6" width="16" height="9.8" fill="#8d72f2"/>
<rect x="745.8" y="453" width="13" height="9" fill="#9a80ff"/>
<rect x="676.4" y="438.8" width="10" height="36.4" fill="#9078f2"/><rect x="735.8" y="438.8" width="10" height="36.4" fill="#9078f2"/>
<path d="M686.4 414 Q686.4 410.4 690 410.4 H732.2 Q735.8 410.4 735.8 414 V455 H686.4 Z" fill="url(#gRed)"/>
<path d="M689.4 411 V454.6 M732.6 411 V454.6" fill="none" stroke-width="0.7"/><path d="M686.4 418.2 H735.8" fill="none" stroke-width="0.9"/>
<rect x="678.8" y="460.4" width="64.4" height="43" fill="#a088ff"/>
<path d="M686.8 460.4 H697.6 V502 Q697.6 504 695.6 504 H686.8 Z" fill="url(#gRed2)" stroke-width="1"/><path d="M724.4 460.4 H734.4 V504 H726.4 Q724.4 504 724.4 502 Z" fill="#9a82fa" stroke-width="1"/>
<rect x="678.8" y="460.4" width="8" height="43" fill="#9a82fa" stroke="none"/><rect x="734.6" y="460.4" width="8.4" height="43" fill="#9a82fa" stroke="none"/>
<path d="M678.8 460.4 V503.4 M743.2 460.4 V503.4" fill="none"/>
<path d="M686.4 454.6 H735.8 V460.4 H686.4 Z" fill="#ad98ff"/>
<path d="M676.4 457.6 H745.8" fill="none" stroke-width="0.5" stroke-dasharray="2 1"/>
<path d="M673.8 505 Q673.8 503.2 675.6 503.2 H746.4 Q748.2 503.2 748.2 505 V508.4 Q748.2 510 746.4 510 H724.4 V508.6 H697.6 V510 H675.6 Q673.8 510 673.8 508.4 Z" fill="#9a80ff"/>
</g>
<ellipse cx="675.6" cy="447.0" rx="1.3" ry="3.2" fill="#222"/>
<ellipse cx="675.6" cy="467.4" rx="1.3" ry="3.2" fill="#222"/>
<ellipse cx="746.6" cy="447.0" rx="1.3" ry="3.2" fill="#222"/>
<ellipse cx="746.6" cy="467.4" rx="1.3" ry="3.2" fill="#222"/>
<path d="M678 442.6 h6 M678 472 h6 M737.4 442.6 h6 M737.4 472 h6 M708 453.4 h5 M711 460.6 v3" stroke="#1a1238" stroke-width="0.6" fill="none"/>
<rect x="758.6" y="450.2" width="20.4" height="14.4" rx="1.5" fill="#fff" stroke="#222" stroke-width="0.8"/><path d="M762.6 450.2 V464.6 M775 450.2 V464.6" stroke="#888" stroke-width="0.6"/>
<rect x="779" y="452.2" width="15.4" height="10.6" fill="#4a5ef6" stroke="#101a70" stroke-width="0.6"/>
<g stroke="#111" stroke-width="0.8"><path d="M816 496.4 V527 M863.4 496.4 V527 M816 510 H827 M852 510 H863.4" fill="none"/><rect x="816" y="515.6" width="11.4" height="11.6" fill="#c2c2c2"/><rect x="852" y="515.6" width="11.4" height="11.6" fill="#c2c2c2"/><path d="M822 496.4 L816 503 M857 496.4 L863.4 503" fill="none" stroke-width="0.6"/></g>
<g stroke="#04062c" stroke-width="1.15" stroke-linejoin="round">
<rect x="794" y="445.2" width="6" height="25" rx="1" fill="#4456ee"/>
<rect x="799.6" y="430" width="5" height="53" rx="2" fill="url(#gMotorCap)"/>
<rect x="874.6" y="431.8" width="17" height="51" rx="3" fill="url(#gMotorCap)"/>
<path d="M889.6 432 V482.6" stroke-width="0.5" fill="none"/>
<rect x="804.2" y="426.2" width="70.6" height="70.4" rx="1.5" fill="url(#gMotor)"/>
<path d="M804.2 482.4 H874.8" fill="none" stroke-width="0.8"/>
<path d="M823 426.6 V418.6 Q823 415.8 825.8 415.8 H854 Q856.8 415.8 856.8 418.6 V428.4 H823 Z" fill="#4a60f6"/>
</g>
<path d="M818.6 494 h3 M860 494 h3" stroke="#ddd" stroke-width="0.8"/>
<rect x="263.2" y="580.6" width="3.8" height="18" fill="#55a055" stroke="#1f6a1f" stroke-width="0.6"/><path d="M265 572 L269.2 581 H260.8 Z" fill="#1f6a1f"/>
<rect x="268" y="600.2" width="18.6" height="3.6" fill="#e05050" stroke="#a81c1c" stroke-width="0.6"/><path d="M294.6 602 L286.2 598 V606 Z" fill="#b81c1c"/>
<circle cx="264.9" cy="602" r="4.4" fill="#1a1a78"/><text x="260.2" y="606" font-family="Liberation Mono,monospace" font-size="9" fill="#1010ff">Z</text>
<text transform="translate(260.6 569.8) scale(0.8 1)" font-family="Liberation Mono,monospace" font-size="12.5" fill="#0a7a0a">Y</text>
<text transform="translate(294.8 606) scale(0.8 1)" font-family="Liberation Mono,monospace" font-size="12.5" fill="#ff1010">X</text>
</svg>
<!--HUD--><div class="abs" style="left:704px;top:108px;width:27px;height:26px;background:#c6c6c6;border:1px solid #8e8e8e;box-sizing:border-box"></div>
<div class="abs" style="left:730px;top:108px;width:14px;height:26px;background:linear-gradient(#fdfdfd,#e2e2e2);border:1px solid #a8a8a8;border-left:1px solid #8e8e8e;box-sizing:border-box"></div>
<svg style="left:0;top:0" width="1169" height="681" viewBox="0 0 1169 681">
<defs><linearGradient id="gLens" x1="0" y1="0" x2="1" y2="1"><stop offset="0" stop-color="#ffffff"/><stop offset="1" stop-color="#dfe6ec"/></linearGradient><linearGradient id="gScope" x1="0" y1="0" x2="0" y2="1"><stop offset="0" stop-color="#ffffff"/><stop offset="0.6" stop-color="#e2e2e2"/><stop offset="1" stop-color="#b4b4b4"/></linearGradient></defs>
<path d="M505.1 123.5 L500.1 128.3" stroke="#4f93c0" stroke-width="3.4" stroke-linecap="round"/><path d="M504.7 123.5 L500.1 127.9" stroke="#9fd0ea" stroke-width="1.2" stroke-linecap="round"/><circle cx="510.2" cy="118.4" r="6.2" fill="url(#gLens)" stroke="#7d8a92" stroke-width="1.4"/>
<path d="M510.2 114 l1.7 2.1 h-3.4 Z M510.2 122.8 l1.7 -2.1 h-3.4 Z M505.8 118.4 l2.1 -1.7 v3.4 Z M514.6 118.4 l-2.1 -1.7 v3.4 Z" fill="#444"/>
<rect x="529.4" y="112.2" width="12.6" height="12.4" fill="none" stroke="#333" stroke-width="1" stroke-dasharray="2.4 1.6"/>
<path d="M528.4 124.8 L523.4 129.6" stroke="#4f93c0" stroke-width="3.4" stroke-linecap="round"/><path d="M528.0 124.8 L523.4 129.2" stroke="#9fd0ea" stroke-width="1.2" stroke-linecap="round"/><circle cx="533.6" cy="119.6" r="6.4" fill="url(#gLens)" stroke="#7d8a92" stroke-width="1.4"/>
<g transform="translate(552.6 123.8) rotate(-36)"><rect x="9" y="-2.2" width="9" height="4.4" rx="0.8" fill="url(#gScope)" stroke="#8a8a8a" stroke-width="0.8"/><path d="M0 -4.2 L10 -3.2 V3.2 L0 4.2 Z" fill="url(#gScope)" stroke="#8a8a8a" stroke-width="0.8" stroke-linejoin="round"/><ellipse cx="0.2" cy="0" rx="1.8" ry="4.2" fill="#c9c9c9" stroke="#6d6d6d" stroke-width="0.9"/><ellipse cx="0.2" cy="0" rx="0.8" ry="2.4" fill="#f2f2f2"/><rect x="17.6" y="-2.8" width="1.8" height="5.6" rx="0.6" fill="#b8b8b8" stroke="#777" stroke-width="0.6"/></g>
<path d="M568.6 124.2 H562.6 V122 L558.2 125.4 L562.6 128.8 V126.6 H568.6 Z" fill="#2f7fb8"/>
<path d="M575.6 117 Q575.6 113 585 113 Q594.4 113 594.4 117 V127.4 L588.6 129.8 V119.4 Q585 118 581.4 119.4 V129.8 L575.6 127.4 Z" fill="#dcdcdc" stroke="#5a5a5a" stroke-width="0.9" stroke-linejoin="round"/>
<path d="M581.4 118.4 Q585 115.4 588.6 118.4 V127.2 Q585 125.4 581.4 127.2 Z" fill="#b9b9b9" stroke="#6a6a6a" stroke-width="0.6"/>
<path d="M575.6 117.4 L581.4 119.4 V129.8 L575.6 127.4 Z M594.4 117.4 L588.6 119.4 V129.8 L594.4 127.4 Z" fill="#5b9fcb" stroke="#1d5f8d" stroke-width="0.9" stroke-linejoin="round"/>
<path d="M576.2 121.4 l4.6 -2 M576.2 124 l4.6 -2.4 M576.2 126.6 l4.6 -2.4 M577.6 128.4 l3.4 -1.8 M589.2 122.4 l4.6 -2.4 M589.2 125 l4.6 -2.4 M589.2 127.6 l4.6 -2.4 M590.4 129 l3.4 -1.6" stroke="#d6ebf7" stroke-width="0.7"/>
<g transform="translate(603.8 124.0) rotate(-36)"><rect x="9" y="-2.2" width="9" height="4.4" rx="0.8" fill="url(#gScope)" stroke="#8a8a8a" stroke-width="0.8"/><path d="M0 -4.2 L10 -3.2 V3.2 L0 4.2 Z" fill="url(#gScope)" stroke="#8a8a8a" stroke-width="0.8" stroke-linejoin="round"/><ellipse cx="0.2" cy="0" rx="1.8" ry="4.2" fill="#c9c9c9" stroke="#6d6d6d" stroke-width="0.9"/><ellipse cx="0.2" cy="0" rx="0.8" ry="2.4" fill="#f2f2f2"/><rect x="17.6" y="-2.8" width="1.8" height="5.6" rx="0.6" fill="#b8b8b8" stroke="#777" stroke-width="0.6"/></g>
<path d="M614.4 111.6 L606.6 116.2 L609.4 117.4 L603.4 122.4 L612.4 118 L609.8 116.8 Z" fill="#ffb628" stroke="#d8641a" stroke-width="0.7" stroke-linejoin="round"/>
<text x="610" y="130" font-family="Liberation Serif,serif" font-weight="bold" font-size="13.5" fill="#2f7fb8">A</text>
<path d="M628 118.6 L633.6 112 H646 V123.4 L640.6 129.6" fill="#fff" stroke="#333" stroke-width="0.9" stroke-linejoin="round"/><path d="M633.6 112 V118.6 M640.6 118.6 L646 112 M639.6 112 V116 M641 121 H646" fill="none" stroke="#555" stroke-width="0.7"/>
<rect x="628" y="118.6" width="12.6" height="11" fill="#7fbfe2" stroke="#1d5f8d" stroke-width="1"/>
<path d="M638.6 114 l1.6 -1.6 l1.6 1.6 Z M642.6 120.4 l1.6 1.4 l1.6 -1.4 Z" fill="#333"/>
<path d="M669.2 114.6 L677.6 111.6 L685.8 114 V126 L677 129.6 L669.2 126.4 Z" fill="#fafafa" stroke="#7a7a7a" stroke-width="0.9" stroke-linejoin="round"/>
<path d="M669.2 114.6 L677 117.4 V129.6 L669.2 126.4 Z" fill="#6cb3dc" stroke="#2d6f9c" stroke-width="0.8"/><path d="M677 117.4 L680.6 116 V128.2 L677 129.6 Z" fill="#3f8dc0"/><path d="M669.2 114.6 L677.6 111.6 L685.8 114 L677 117.4 Z" fill="#dff0fa" stroke="#7a7a7a" stroke-width="0.6"/>
<path d="M653.6 119.6 h5.6 l-2.8 3.2 Z" fill="#9a9a9a"/>
<path d="M693.6 119.6 h5.6 l-2.8 3.2 Z" fill="#9a9a9a"/>
<path d="M799.6 119.6 h5.6 l-2.8 3.2 Z" fill="#9a9a9a"/>
<path d="M839.6 119.6 h5.6 l-2.8 3.2 Z" fill="#9a9a9a"/>
<path d="M733.6 119.6 h5.6 l-2.8 3.2 Z" fill="#444"/>
<path d="M708.6 120.4 Q717.2 110.8 726 120.4 Q717.2 129.8 708.6 120.4 Z" fill="#fdfdfd" stroke="#222" stroke-width="1.2"/><circle cx="717.2" cy="120.4" r="4" fill="#333"/><circle cx="717.2" cy="120.4" r="1.8" fill="#000"/><path d="M717.4 112.6 V129.4" stroke="#111" stroke-width="1"/><path d="M717.9 116.4 A4 4 0 0 1 717.9 124.4 Z" fill="#b9b9b9"/>
<defs><clipPath id="hb1"><circle cx="755.8" cy="118.6" r="7.6"/></clipPath></defs><g clip-path="url(#hb1)"><rect x="748.2" y="111.0" width="15.2" height="15.2" fill="#3a72d0"/><path d="M755.3 111.0 H763.4 V120.8 L756.4 119.0 Z" fill="#d8423a"/><path d="M748.2 121.2 L756.4 119.0 L757.6 126.2 H748.2 Z" fill="#35aa45"/><path d="M756.4 119.0 L763.4 120.8 V126.2 H757.6 Z" fill="#f0c21a"/><circle cx="755.8" cy="118.6" r="7.6" fill="url(#gBall)"/></g>
<g transform="translate(756.4 130.2) rotate(-40)"><path d="M0 0 L3.6 -2 V2 Z" fill="#e8cfa0" stroke="#444" stroke-width="0.5"/><rect x="3.6" y="-2" width="9" height="4" fill="#f6d13a" stroke="#6a5208" stroke-width="0.7"/><rect x="12.6" y="-2" width="2.4" height="4" fill="#e0605a" stroke="#6a2a20" stroke-width="0.6"/><path d="M0 0 L1.4 -0.8 V0.8 Z" fill="#222"/></g>
<rect x="773" y="120.4" width="19" height="10" fill="#2a2a2a"/><g fill="#f4f4f4"><rect x="774.6" y="121.6" width="3.6" height="2.4"/><rect x="786.6" y="121.6" width="3.6" height="2.4"/><rect x="777.4" y="125.6" width="4" height="3.4"/><rect x="785" y="125.6" width="4" height="3.4"/></g>
<defs><clipPath id="hb2"><circle cx="782.3" cy="118.0" r="7.4"/></clipPath></defs><g clip-path="url(#hb2)"><rect x="774.9" y="110.6" width="14.8" height="14.8" fill="#3a72d0"/><path d="M781.8 110.6 H789.7 V120.2 L782.9 118.4 Z" fill="#d8423a"/><path d="M774.9 120.6 L782.9 118.4 L784.1 125.4 H774.9 Z" fill="#35aa45"/><path d="M782.9 118.4 L789.7 120.2 V125.4 H784.1 Z" fill="#f0c21a"/><circle cx="782.3" cy="118.0" r="7.4" fill="url(#gBall)"/></g>
<rect x="814.4" y="113.2" width="17.4" height="11.6" fill="#e6e6e6" stroke="#6d6d6d" stroke-width="1.3"/><rect x="822" y="125" width="2.4" height="2.6" fill="#6d6d6d"/><rect x="818.4" y="127.4" width="9.6" height="1.5" fill="#6d6d6d"/>
</svg><!--/HUD-->
</div>

<!-- RIGHT -->
<div id="rp">
<div class="abs" style="left:958px;top:84px;width:211px;height:3px;background:#b9cfe9"></div>
<div class="abs" style="left:958px;top:87px;width:211px;height:1px;background:#35b6de"></div>
<div class="abs" style="left:958px;top:88px;width:211px;height:1px;background:#111"></div>
<div class="abs" style="left:958px;top:84px;width:1px;height:5px;background:#111"></div>
<div class="abs" style="left:1122px;top:84px;width:1px;height:4px;background:#8aa0a8"></div>
<div class="abs" style="left:1126px;top:89px;width:43px;height:586px;background:#f7f7f7;border-left:1px solid #7a7a7a;box-sizing:border-box"></div>
<div class="abs" style="left:1127px;top:89px;width:42px;height:16px;background:#a9aaad;border-bottom:1px solid #111"></div>
<svg style="left:0;top:0" width="1169" height="681" viewBox="0 0 1169 681">
<path d="M1141.4 89.4 L1136.8 93.6 L1141.4 97.8 M1146.8 89.4 L1142.2 93.6 L1146.8 97.8" fill="none" stroke="#111" stroke-width="2.4"/>
<path d="M1130 139.6 H1169" stroke="#c4c4c4" stroke-width="1"/>
<g fill="none" stroke="#a3a3a3" stroke-width="1.1"><rect x="994.5" y="92.5" width="11" height="13"/><rect x="1020.5" y="92.5" width="11" height="13"/><rect x="1075.5" y="93.5" width="8" height="6"/><path d="M1075.5 96.5 H1071.5 V103.5 H1080.5 V99.5"/><path d="M1099 94.2 L1108.6 103.6 M1108.6 94.2 L1099 103.6" stroke-width="1.2"/></g>
<path d="M999.6 95.4 V103.2 L995.4 99.3 Z M1026.8 95.4 V103.2 L1031 99.3 Z" fill="#a3a3a3"/><rect x="1047" y="101.6" width="10" height="3" fill="#a3a3a3"/>
<circle cx="1145.1" cy="121.8" r="7.6" fill="#fafafa" stroke="#d4d4d4" stroke-width="1"/><path d="M1140 121.8 L1144.6 117.6 V120 H1150 V123.6 H1144.6 V126 Z" fill="#cacaca"/>
<circle cx="1172" cy="121.8" r="7.6" fill="#fafafa" stroke="#d4d4d4" stroke-width="1"/><rect x="1167" y="120" width="4" height="3.6" fill="#cacaca"/>
<rect x="1154.5" y="147.5" width="16" height="14" fill="#dbe9f8" stroke="#7aa7de" stroke-width="1"/><rect x="1164" y="150" width="6" height="9" fill="#c0201c"/>
<g transform="translate(1142.6 153) rotate(-10)"><rect x="0" y="0" width="36" height="21.6" rx="3" fill="#f4521f"/><text transform="translate(2.6 18.6) scale(1.62 1)" font-family="Liberation Sans,sans-serif" font-weight="bold" font-style="italic" font-size="22" fill="#fff">S</text></g>
<g fill="#fbfbfb" stroke="#8d8d8d" stroke-width="0.9"><path d="M1142.6 177.4 L1146.8 181.4 L1142.6 185.6 Z M1142.6 199.4 L1146.8 203.6 L1142.6 207.8 Z"/></g>
<rect x="1156" y="178.6" width="14" height="11" fill="#111"/><g fill="#fff"><rect x="1157.6" y="183" width="3" height="2.4"/><rect x="1160" y="186.6" width="3.6" height="2.4"/><rect x="1166.6" y="186.6" width="3" height="2.4"/></g>
<defs><clipPath id="cb2"><circle cx="1164.4" cy="179.6" r="6.2"/></clipPath></defs><g clip-path="url(#cb2)"><rect x="1158" y="173" width="13" height="13" fill="#2a62c8"/><path d="M1164 173 H1171 V182 L1164.6 180 Z" fill="#d42a22"/><path d="M1158 181 L1164.6 180 L1166 186 H1158 Z" fill="#2aa33a"/><path d="M1164.6 180 L1171 182 V186 H1166 Z" fill="#f0c21a"/><circle cx="1164.4" cy="179.6" r="6.2" fill="url(#gBall)"/></g>
<path d="M1159.6 196.6 Q1159.6 193.6 1166 193.6 Q1172 193.6 1172 196.6 V207.4 Q1172 210.4 1166 210.4 Q1159.6 210.4 1159.6 207.4 Z" fill="#f2f2f2" stroke="#333" stroke-width="1.1"/><path d="M1159.6 196.6 Q1159.6 199.6 1166 199.6 Q1172 199.6 1172 196.6" fill="none" stroke="#333" stroke-width="0.9"/><rect x="1162.4" y="202.6" width="8" height="4" fill="#cfe6f4" stroke="#8ab" stroke-width="0.5"/><rect x="1163.4" y="203.4" width="2.2" height="2.4" fill="#2f86c4"/><rect x="1167" y="203.4" width="2.2" height="2.4" fill="#2f86c4"/>
</svg>
<div class="abs" style="left:1131px;top:299.0px;width:38px;height:5.5px;background:linear-gradient(#d8dae6,#82869e 45%,#82869e 55%,#dfe1ea)"></div>
<div class="abs" style="left:1131px;top:375.5px;width:38px;height:5.5px;background:linear-gradient(#d8dae6,#82869e 45%,#82869e 55%,#dfe1ea)"></div>
<div class="abs" style="left:1135px;top:307px;width:40px;height:16px;line-height:16px;font-size:12px;white-space:nowrap;overflow:hidden">默认外观</div>
<div class="abs" style="left:1135px;top:321px;width:40px;height:49px;background:#ffff80;border:1px solid #111;box-sizing:border-box"></div>
<div class="abs" style="left:1139px;top:342px;width:31px;height:16px;line-height:16px;font-size:12px;white-space:nowrap;overflow:hidden">Feature</div>
<div class="abs" style="left:1151px;top:384px;width:18px;height:112px;background:#1c1cf2"></div>
<div class="abs" style="left:1155px;top:388px;width:14px;height:104px;background:linear-gradient(#a2a2a2,#c9c9c9 18%,#bdbdbd 40%,#b2b2b2 70%,#c2c2c2 92%,#a9a9a9);overflow:hidden"><div class="abs" style="left:2.4px;top:-7.6px;width:117px;height:117px;border-radius:50%;background:radial-gradient(circle at 45% 35%,#dfe2ee,#b9bccb 55%,#9da0b0)"></div></div>
<div class="abs" style="left:1151px;top:539px;width:18px;height:112px;background:linear-gradient(#8e8e8e,#b4b4b4 10%,#c6c6c6 35%,#b6b6b6 60%,#a6a6a6 85%,#9c9c9c);overflow:hidden"><div class="abs" style="left:6.1px;top:6.5px;width:98px;height:98px;border-radius:50%;background:radial-gradient(circle at 35% 38%,#f4f4f4,#e2e2e2 45%,#a2a2a2 75%);overflow:hidden"><svg style="left:0;top:0" width="20" height="98" viewBox="0 0 20 98"><path d="M0 45.5 L2.9 30.5 L7.9 21.5 L12 16.6 L12 20.5 L8.4 30.5 L7.5 36.5 Z M8.3 38.5 L12 32.5 V55.5 L9.9 48.5 Z" fill="#1c1c1c"/></svg></div></div>
<div class="abs" style="left:1100px;top:159px;width:27px;height:168px;background:#d9d9d9;border:1px solid #8d8d8d;box-sizing:border-box"></div>
<div class="abs" style="left:1101px;top:182px;width:25px;height:1px;background:#8d8d8d"></div>
<div class="abs" style="left:1101px;top:206px;width:25px;height:1px;background:#8d8d8d"></div>
<div class="abs" style="left:1101px;top:230px;width:25px;height:1px;background:#8d8d8d"></div>
<div class="abs" style="left:1101px;top:254px;width:25px;height:1px;background:#8d8d8d"></div>
<div class="abs" style="left:1101px;top:278px;width:25px;height:1px;background:#8d8d8d"></div>
<div class="abs" style="left:1101px;top:302px;width:25px;height:1px;background:#8d8d8d"></div>
<div class="abs" style="left:1101px;top:255px;width:26px;height:23px;background:#f7f7f7"></div>
<div class="abs" style="left:1122px;top:150px;width:3px;height:6px;background-image:radial-gradient(#aab 0.6px,transparent 0.8px);background-size:3px 3px"></div>
<svg style="left:0;top:0" width="1169" height="681" viewBox="0 0 1169 681">
<path d="M1104.6 171 L1113 162.4 L1121.6 171" fill="none" stroke="#1d5f8d" stroke-width="2.2" stroke-linejoin="miter"/><path d="M1106.6 170.4 V178.6 H1119.6 V170.4 L1113 164.4 Z" fill="#fff" stroke="#2a2a2a" stroke-width="1.1"/><rect x="1111.4" y="172.6" width="3.6" height="6" fill="#f2f2f2" stroke="#2a2a2a" stroke-width="0.9"/>
<g fill="#f6f6f6" stroke="#222" stroke-width="1" stroke-linejoin="round"><path d="M1106 189.6 L1109.4 186.4 L1112.2 188.2 L1110.8 192 V203.2 L1106 200 Z"/><path d="M1110.8 192 L1112.2 188.2 L1113 186 L1115.6 187.6 L1114.4 190.8 V202.4 L1110.8 203.2 Z"/><path d="M1114.4 190.8 L1115.6 187.6 L1116.4 185.4 L1118.8 187.4 V200.4 L1114.4 202.4 Z"/><path d="M1106 189.6 L1110.8 192 M1109.4 186.4 L1110.8 192" fill="none" stroke-width="0.7"/></g>
<path d="M1103.6 227.2 V211.6 H1109.6 L1111.6 214 H1119.6 V217" fill="#dcdcdc" stroke="#222" stroke-width="1.2" stroke-linejoin="round"/><path d="M1103.6 227.2 L1108.6 217 H1122.8 L1117.6 227.2 Z" fill="url(#gFold)" stroke="#222" stroke-width="1.2" stroke-linejoin="round"/>
<rect x="1104.6" y="235.6" width="16.6" height="14.8" rx="1.4" fill="#fff" stroke="#2a2a2a" stroke-width="1.2"/><path d="M1107 238.6 H1114.6 V240.6 H1112.2 V244.4 H1115.4 V247.4 H1106.4 V244.4 H1109.4 V240.6 H1107 Z" fill="#f6c81e" stroke="#8a6a10" stroke-width="0.5"/><rect x="1116.6" y="238.2" width="2.6" height="2.6" fill="#f6c81e"/><rect x="1117" y="243" width="2.6" height="5" fill="#cfcfcf" stroke="#888" stroke-width="0.4"/>
<defs><clipPath id="cb3"><circle cx="1113" cy="265.6" r="8"/></clipPath></defs><g clip-path="url(#cb3)"><rect x="1104" y="256" width="18" height="20" fill="#2a62c8"/><path d="M1112.4 256 H1122 V268 L1113.6 265.6 Z" fill="#d42a22"/><path d="M1104 268.4 L1113.6 265.6 L1115 275 H1104 Z" fill="#2aa33a"/><path d="M1113.6 265.6 L1122 268 V275 H1115 Z" fill="#f0c21a"/><circle cx="1113" cy="265.6" r="8" fill="url(#gBall)"/></g>
<rect x="1104.8" y="283" width="16.4" height="15.4" rx="1.2" fill="#fff" stroke="#2b2b2b" stroke-width="1.2"/><rect x="1104.8" y="283" width="16.4" height="2.4" fill="#3f8fc4" stroke="#1d5f8d" stroke-width="0.7"/>
<rect x="1107" y="288.2" width="3.6" height="1.8" fill="#2f7fb8" stroke="#174f74" stroke-width="0.5"/><path d="M1112.6 289.1 H1119" stroke="#2b2b2b" stroke-width="0.9"/>
<rect x="1107" y="291.8" width="3.6" height="1.8" fill="#2f7fb8" stroke="#174f74" stroke-width="0.5"/><path d="M1112.6 292.7 H1119" stroke="#2b2b2b" stroke-width="0.9"/>
<rect x="1107" y="295.2" width="3.6" height="1.8" fill="#2f7fb8" stroke="#174f74" stroke-width="0.5"/><path d="M1112.6 296.1 H1119" stroke="#2b2b2b" stroke-width="0.9"/>
<path d="M1104.6 308.4 H1115.4 V316 H1109.4 L1106.4 319 V316 H1104.6 Z" fill="#3f8fc4" stroke="#1d5f8d" stroke-width="1" stroke-linejoin="round"/><path d="M1111.6 312.4 H1121.4 V319 H1120 V322.4 L1117 319 H1111.6 Z" fill="#f4f4f4" stroke="#444" stroke-width="1" stroke-linejoin="round"/>
</svg>
</div>

<!-- BOTTOM -->
<div id="bt">
<div class="abs" style="left:0;top:661px;width:1123px;height:14px;background:#f7f7f7"></div>
<div class="abs" style="left:0;top:660px;width:1123px;height:1px;background:#858585"></div>
<div class="abs" style="left:1122px;top:660px;width:1px;height:15px;background:#9ab4c0"></div>
<div class="abs" style="left:0;top:676px;width:1169px;height:5px;background:#f5f5f5"></div>
<div class="abs" style="left:0;top:675px;width:1169px;height:1px;background:#787878"></div>
<div class="abs" style="left:0;top:661px;width:257px;height:14px;background:#d4d4d4"></div>
<div class="abs" style="left:0;top:661px;width:9px;height:14px;background:#f4f4f4"></div>
<div class="abs" style="left:9px;top:661px;width:64px;height:14px;background:#b6b6b6"></div>
<div class="abs" style="left:73px;top:661px;width:46px;height:15px;background:#fcfcfc;line-height:17px;text-align:center;font-size:12px;padding-left:2px;box-sizing:border-box">模型</div>
<div class="abs" style="left:119px;top:661px;width:58px;height:14px;border-left:1px solid #8d8d8d;border-right:1px solid #8d8d8d;box-sizing:border-box;line-height:17px;text-align:center;font-size:12px">3D 视图</div>
<div class="abs" style="left:177px;top:661px;width:80px;height:14px;border-right:1px solid #8d8d8d;box-sizing:border-box;line-height:17px;text-align:left;padding-left:7px;font-size:12px">运动算例 1</div>
<svg style="left:9px;top:661px" width="64" height="14" viewBox="0 0 64 14"><g stroke="#8c8c8c" stroke-width="1" fill="#969696"><path d="M3.5 2.5 V11.5 M11 2.5 L5 7 L11 11.5 Z M25 2.5 L19 7 L25 11.5 Z M35 2.5 L41 7 L35 11.5 Z M49 2.5 L55 7 L49 11.5 Z M57.5 2.5 V11.5"/><path d="M16.5 0 V14 M31.5 0 V14 M46.5 0 V14" stroke="#cdcdcd"/></g></svg>
<svg style="left:1158px;top:677px" width="11" height="4" viewBox="0 0 11 4"><path d="M2.4 4 L4.4 0.6 L6.2 4 Z" fill="#e8902a"/><path d="M8 4 L11 1 V4 Z" fill="#222"/></svg>
</div>

</body></html>
